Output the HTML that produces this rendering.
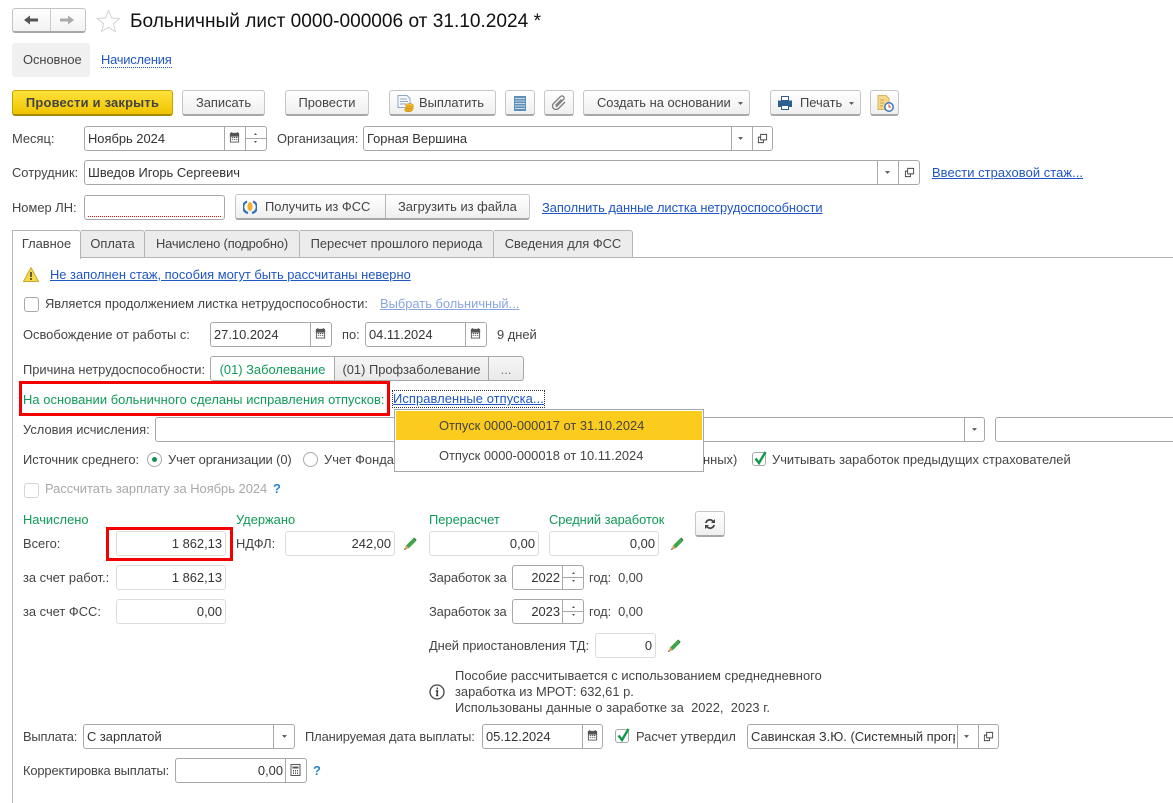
<!DOCTYPE html>
<html lang="ru"><head><meta charset="utf-8"><title>Больничный лист</title>
<style>
html,body{margin:0;padding:0;background:#fff}
body{position:relative;width:1173px;height:803px;overflow:hidden;font:12.9px/14px "Liberation Sans",Arial,sans-serif;color:#444}
div,a,svg{position:absolute}
.t{white-space:nowrap;height:14px;margin-top:1px}
.g{color:#0f9a57}
.a{color:#1f56c4;text-decoration:underline}
.f{box-sizing:border-box;background:#fff;border:1px solid #a8a8a8;border-radius:3px;height:25px}
.l{border-color:#dcdcdc}
.v{width:1px;background:#a8a8a8;top:0;bottom:0}
.h{height:1px;background:#a8a8a8;left:0;right:0;top:11px}
.b{box-sizing:border-box;height:26px;top:90px;border:1px solid #c6c6c6;border-bottom:2px solid #a8a8a8;border-radius:3px;background:linear-gradient(#fff,#efefef);text-align:center;line-height:24px;color:#444;white-space:nowrap}
.r{text-align:right}
.in{left:3px;top:5px;white-space:nowrap;color:#333}
.nr{right:3px;top:5px;white-space:nowrap;color:#333}
.tab{box-sizing:border-box;top:230px;height:28px;border:1px solid #b5b5b5;border-left:0;background:#ececec;border-radius:0 3px 0 0;text-align:center;line-height:25px;white-space:nowrap}
</style></head><body>
<svg width="0" height="0" style="left:0;top:0"><defs>
<symbol id="cal" viewBox="0 0 12 12"><path d="M1.5 2.500h9v8.500h-9z" fill="none" stroke="#555"/><path d="M1.500 1.500h9v3h-9zM3 0v2M9 0v2" stroke="#555" fill="#555"/><path d="M3 6h1.500M5.300 6h1.500M7.600 6h1.500M3 8h1.500M5.300 8h1.500M7.600 8h1.500" stroke="#555"/></symbol>
<symbol id="dd" viewBox="0 0 7 4"><path d="M0 0h7L3.500 4z" fill="#555"/></symbol>
<symbol id="op" viewBox="0 0 12 12"><path d="M4 1.500h6.500v6H4z" fill="none" stroke="#444"/><path d="M4 4.500H1.500v6H7V7.500" fill="none" stroke="#444"/></symbol>
<symbol id="pen" viewBox="0 0 14 14"><path d="M3 8.500 10 1.500 12.800 4.200 5.800 11.200z" fill="#3fa648"/><path d="M10 1.500 11.200.5 13.600 2.800 12.800 4.200z" fill="#3f7d45"/><path d="M3 8.500 1 13 5.800 11.200z" fill="#e0a060"/><path d="M1 13l.7-1.800 1.200 1z" fill="#444"/></symbol>
<symbol id="chk" viewBox="0 0 14 14"><path d="M2.500 7.500 6 12 12.500 1" fill="none" stroke="#0d9a4b" stroke-width="2.400"/></symbol>
<symbol id="spin" viewBox="0 0 5 14"><path d="M2.500 2 4 4H1zM1 10h3L2.500 12z" fill="#555"/></symbol>
</defs></svg>

<!-- header -->
<div class="f" style="left:12px;top:8px;width:74px;height:25px;border-color:#c4c4c4;border-bottom:2px solid #a8a8a8;background:linear-gradient(#fff,#f2f2f2)"><div class="v" style="left:37px;background:#ccc"></div></div>
<svg style="left:24px;top:15px" width="14" height="10" viewBox="0 0 14 10"><path d="M0 5 6 .5V3.500h8v3H6v3z" fill="#555"/></svg>
<svg style="left:60px;top:15px" width="14" height="10" viewBox="0 0 14 10"><path d="M14 5 8 .5V3.500H0v3h8v3z" fill="#aaa"/></svg>
<svg style="left:96px;top:9px" width="25" height="24" viewBox="0 0 25 24"><path d="M12.500 1.500l3.100 7.400 8 .6-6.100 5.200 1.900 7.800-6.900-4.200-6.900 4.200 1.900-7.800L1.400 9.500l8-.6z" fill="#fff" stroke="#d2d2d2"/></svg>
<div class="t" style="left:130px;top:11px;height:20px;font-size:19.100px;line-height:20px;color:#111">Больничный лист 0000-000006 от 31.10.2024 *</div>
<div style="left:12px;top:43px;width:78px;height:34px;background:#f0f0f0;border-radius:3px;line-height:34px;text-indent:11px;white-space:nowrap;letter-spacing:-.05px">Основное</div>
<div class="t" style="left:101px;top:52px;color:#1f56c4;border-bottom:1px dotted #1f56c4;height:14px;letter-spacing:-.2px">Начисления</div>

<!-- toolbar -->
<div class="b" style="left:12px;width:161px;background:linear-gradient(#fde23a,#f0c400);border-color:#c9a400;border-bottom-color:#a88a00;font-weight:bold;color:#444;letter-spacing:.22px">Провести и закрыть</div>
<div class="b" style="left:182px;width:83px">Записать</div>
<div class="b" style="left:285px;width:84px">Провести</div>
<div class="b" style="left:389px;width:107px;text-align:left;padding-left:29px">Выплатить</div>
<svg style="left:397px;top:95px" width="18" height="17" viewBox="0 0 18 17"><path d="M1 .5h9l3 3v9H1z" fill="#f5f8fc" stroke="#8fa7c2"/><path d="M3 4h7M3 6.500h8M3 9h6" stroke="#8fa7c2"/><ellipse cx="12.500" cy="10.500" rx="4" ry="2" fill="#f2b92c" stroke="#b98a10" stroke-width=".5"/><ellipse cx="12.500" cy="13" rx="4" ry="2" fill="#eeb020" stroke="#b98a10" stroke-width=".5"/><ellipse cx="11.500" cy="15" rx="4" ry="1.800" fill="#e8a818" stroke="#b98a10" stroke-width=".5"/></svg>
<div class="b" style="left:505px;width:30px"></div>
<svg style="left:514px;top:96px" width="12" height="15" viewBox="0 0 12 15"><rect width="12" height="15" fill="#5f8fb5"/><path d="M1 2.500h10M1 5h10M1 7.500h10M1 10h10M1 12.500h10" stroke="#c5d9e8"/></svg>
<div class="b" style="left:544px;width:30px"></div>
<svg style="left:551px;top:95px" width="16" height="16" viewBox="0 0 16 16"><path d="M5 12 12.500 4.500a2 2 0 0 0-3-3L2.500 8.500a3.500 3.500 0 0 0 5 5L14 7M4.500 10.500 10.500 4.500" fill="none" stroke="#7c7c7c" stroke-width="1.300"/></svg>
<div class="b" style="left:583px;width:167px;text-align:left;padding-left:13px">Создать на основании</div>
<svg style="left:738px;top:102px" width="5" height="3"><use href="#dd"/></svg>
<div class="b" style="left:770px;width:91px;text-align:left;padding-left:29px">Печать</div>
<svg style="left:778px;top:96px" width="14" height="14" viewBox="0 0 14 14"><path d="M3.500.5h7v4h-7z" fill="#fff" stroke="#2e5f8e"/><path d="M0 4.500h14v6.500h-3v-2H3v2H0z" fill="#2e5f8e"/><path d="M3.500 9.500h7v4h-7z" fill="#fff" stroke="#2e5f8e"/></svg>
<svg style="left:849px;top:102px" width="5" height="3"><use href="#dd"/></svg>
<div class="b" style="left:870px;width:29px"></div>
<svg style="left:877px;top:95px" width="17" height="17" viewBox="0 0 17 17"><path d="M1 .5h8l3 3v11H1z" fill="#f4d78a" stroke="#d8b45a"/><path d="M3 5h4M3 8h4M3 11h3" stroke="#c9a650"/><circle cx="12" cy="12" r="4.200" fill="#fff" stroke="#3f78b5" stroke-width="1.500"/><path d="M12 9.500V12h2" stroke="#c44" fill="none"/></svg>

<!-- row: month/org -->
<div class="t" style="left:12px;top:131px">Месяц:</div>
<div class="f" style="left:84px;top:126px;width:183px"><div class="in">Ноябрь 2024</div><div class="v" style="left:139px"></div><div class="v" style="left:160px"></div><div class="h" style="left:161px"></div></div>
<svg style="left:229px;top:132px" width="11" height="11"><use href="#cal"/></svg>
<svg style="left:253px;top:131px" width="5" height="14"><use href="#spin"/></svg>
<div class="t" style="left:277px;top:131px">Организация:</div>
<div class="f" style="left:363px;top:126px;width:410px"><div class="in">Горная Вершина</div><div class="v" style="left:367px"></div><div class="v" style="left:388px"></div></div>
<svg style="left:738px;top:137px" width="5" height="3"><use href="#dd"/></svg>
<svg style="left:757px;top:133px" width="11" height="11"><use href="#op"/></svg>

<!-- row: employee -->
<div class="t" style="left:12px;top:165px">Сотрудник:</div>
<div class="f" style="left:84px;top:160px;width:836px"><div class="in">Шведов Игорь Сергеевич</div><div class="v" style="left:792px"></div><div class="v" style="left:813px"></div></div>
<svg style="left:885px;top:171px" width="5" height="3"><use href="#dd"/></svg>
<svg style="left:904px;top:167px" width="11" height="11"><use href="#op"/></svg>
<div class="t a" style="left:932px;top:165px;letter-spacing:.08px">Ввести страховой стаж...</div>

<!-- row: LN -->
<div class="t" style="left:12px;top:200px">Номер ЛН:</div>
<div class="f" style="left:84px;top:195px;width:141px"><div style="left:3px;right:3px;top:20px;border-top:1px dotted #e01010"></div></div>
<div class="b" style="left:235px;top:194px;width:295px;height:26px"><div class="v" style="left:149px;background:#b5b5b5"></div><div style="left:29px;top:0">Получить из ФСС</div><div style="left:162px;top:0">Загрузить из файла</div></div>
<svg style="left:243px;top:200px" width="14" height="14" viewBox="0 0 14 14"><path d="M4 1.500A6 6 0 0 0 5 13M10 1.500A6 6 0 0 1 9 13" fill="none" stroke="#2f6fb5" stroke-width="2.200"/><ellipse cx="7" cy="6.500" rx="2.500" ry="4.500" fill="#f0b030"/></svg>
<div class="t a" style="left:542px;top:200px;letter-spacing:-.05px">Заполнить данные листка нетрудоспособности</div>

<!-- tabs -->
<div style="left:12px;top:257px;right:0;height:1px;background:#b5b5b5"></div>
<div style="left:12px;top:230px;width:1px;height:573px;background:#b5b5b5"></div>
<div class="tab" style="left:13px;width:68px;background:#fff;border-bottom:0;height:29px">Главное</div>
<div class="tab" style="left:81px;width:64px">Оплата</div>
<div class="tab" style="left:145px;width:155px;letter-spacing:-.15px">Начислено (подробно)</div>
<div class="tab" style="left:300px;width:194px">Пересчет прошлого периода</div>
<div class="tab" style="left:494px;width:139px">Сведения для ФСС</div>

<!-- warning -->
<svg style="left:23px;top:267px" width="16" height="15" viewBox="0 0 16 15"><path d="M8 .5 15.500 14.500H.5z" fill="#f6d94a" stroke="#c9a930"/><path d="M8 5v5M8 11v2" stroke="#333" stroke-width="1.500"/></svg>
<div class="t a" style="left:50px;top:267px">Не заполнен стаж, пособия могут быть рассчитаны неверно</div>

<div class="f" style="left:24px;top:297px;width:15px;height:15px"></div>
<div class="t" style="left:45px;top:296px">Является продолжением листка нетрудоспособности:</div>
<div class="t a" style="left:380px;top:296px;color:#8aa6de">Выбрать больничный...</div>

<div class="t" style="left:23px;top:327px">Освобождение от работы с:</div>
<div class="f" style="left:210px;top:322px;width:122px"><div class="in">27.10.2024</div><div class="v" style="left:99px"></div></div>
<svg style="left:315px;top:328px" width="11" height="11"><use href="#cal"/></svg>
<div class="t" style="left:342px;top:327px">по:</div>
<div class="f" style="left:365px;top:322px;width:122px"><div class="in">04.11.2024</div><div class="v" style="left:99px"></div></div>
<svg style="left:470px;top:328px" width="11" height="11"><use href="#cal"/></svg>
<div class="t" style="left:497px;top:327px">9 дней</div>

<div class="t" style="left:23px;top:362px">Причина нетрудоспособности:</div>
<div class="f" style="left:210px;top:356px;width:314px;background:linear-gradient(#f6f6f6,#e9e9e9);overflow:hidden">
<div style="left:0;top:0;bottom:0;width:123px;background:#fff;text-align:center;line-height:25px;color:#0f9a57;white-space:nowrap">(01) Заболевание</div>
<div class="v" style="left:123px"></div>
<div style="left:124px;top:0;width:153px;text-align:center;line-height:25px;white-space:nowrap">(01) Профзаболевание</div>
<div class="v" style="left:277px"></div>
<div style="left:278px;top:0;width:34px;text-align:center;line-height:25px;color:#777">...</div>
</div>

<div class="t g" style="left:23px;top:392px;letter-spacing:.06px">На основании больничного сделаны исправления отпусков:</div>
<div style="left:19px;top:381px;box-sizing:border-box;width:371px;height:35px;border:3px solid #f40000"></div>
<div class="t a" style="left:393px;top:390px;height:16px;line-height:15px;outline:1px dotted #333;letter-spacing:.09px">Исправленные отпуска...</div>

<div class="t" style="left:23px;top:422px">Условия исчисления:</div>
<div class="f" style="left:155px;top:417px;width:830px"><div class="v" style="left:808px"></div></div>
<svg style="left:972px;top:428px" width="5" height="3"><use href="#dd"/></svg>
<div class="f" style="left:995px;top:417px;width:190px"></div>

<div class="t" style="left:23px;top:452px">Источник среднего:</div>
<div style="left:147px;top:452px;box-sizing:border-box;width:15px;height:15px;border:1px solid #a8a8a8;border-radius:50%"><div style="left:4px;top:4px;width:5px;height:5px;border-radius:50%;background:#0d8f50"></div></div>
<div class="t" style="left:168px;top:452px;letter-spacing:-.1px">Учет организации (0)</div>
<div style="left:303px;top:452px;box-sizing:border-box;width:15px;height:15px;border:1px solid #a8a8a8;border-radius:50%"></div>
<div class="t" style="left:324px;top:452px">Учет Фонда</div>
<div class="t" style="left:703px;top:452px">нных)</div>
<div class="f" style="left:752px;top:452px;width:14px;height:14px"></div>
<svg style="left:753px;top:451px" width="14" height="14"><use href="#chk"/></svg>
<div class="t" style="left:772px;top:452px">Учитывать заработок предыдущих страхователей</div>

<div class="f" style="left:24px;top:483px;width:15px;height:15px;border-color:#d5d5d5"></div>
<div class="t" style="left:45px;top:481px;color:#a8a8a8">Рассчитать зарплату за Ноябрь 2024</div>
<div class="t" style="left:273px;top:481px;color:#2a86c8;font-weight:bold">?</div>

<!-- popup -->
<div style="left:394px;top:409px;box-sizing:border-box;width:310px;height:63px;background:#fff;border:1px solid #a8a8a8">
<div style="left:1px;top:1px;width:306px;height:29px;background:#fbcb1e;line-height:29px;white-space:nowrap"><span style="margin-left:43px">Отпуск 0000-000017 от 31.10.2024</span></div>
<div class="t" style="left:44px;top:38px">Отпуск 0000-000018 от 10.11.2024</div>
</div>

<!-- totals -->
<div class="t g" style="left:23px;top:512px">Начислено</div>
<div class="t" style="left:23px;top:536px">Всего:</div>
<div class="f l" style="left:116px;top:531px;width:110px"><div class="nr">1 862,13</div></div>
<div style="left:106px;top:527px;box-sizing:border-box;width:127px;height:34px;border:3px solid #f40000"></div>
<div class="t" style="left:23px;top:570px">за счет работ.:</div>
<div class="f l" style="left:116px;top:565px;width:110px"><div class="nr">1 862,13</div></div>
<div class="t" style="left:23px;top:604px">за счет ФСС:</div>
<div class="f l" style="left:116px;top:599px;width:110px"><div class="nr">0,00</div></div>

<div class="t g" style="left:236px;top:512px">Удержано</div>
<div class="t" style="left:236px;top:536px">НДФЛ:</div>
<div class="f l" style="left:285px;top:531px;width:110px"><div class="nr">242,00</div></div>
<svg style="left:403px;top:537px" width="14" height="14"><use href="#pen"/></svg>

<div class="t g" style="left:429px;top:512px">Перерасчет</div>
<div class="f l" style="left:429px;top:531px;width:110px"><div class="nr">0,00</div></div>
<div class="t g" style="left:549px;top:512px;letter-spacing:-.05px">Средний заработок</div>
<div class="f l" style="left:549px;top:531px;width:110px"><div class="nr">0,00</div></div>
<svg style="left:670px;top:537px" width="14" height="14"><use href="#pen"/></svg>
<div class="b" style="left:695px;top:511px;width:30px"></div>
<svg style="left:704px;top:518px" width="12" height="12" viewBox="0 0 12 12"><path d="M1 5a5 5 0 0 1 8.500-2.500L11 1v4H7l1.300-1.300A3.300 3.300 0 0 0 2.800 5zM11 7a5 5 0 0 1-8.500 2.500L1 11V7h4L3.700 8.300A3.300 3.300 0 0 0 9.200 7z" fill="#444"/></svg>

<div class="t" style="left:429px;top:570px;letter-spacing:-.1px">Заработок за</div>
<div class="f" style="left:512px;top:565px;width:72px"><div class="nr" style="right:23px">2022</div><div class="v" style="left:49px"></div><div class="h" style="left:50px"></div></div>
<svg style="left:571px;top:570px" width="5" height="14"><use href="#spin"/></svg>
<div class="t" style="left:589px;top:570px;letter-spacing:-.08px">год:&nbsp; 0,00</div>
<div class="t" style="left:429px;top:604px;letter-spacing:-.1px">Заработок за</div>
<div class="f" style="left:512px;top:599px;width:72px"><div class="nr" style="right:23px">2023</div><div class="v" style="left:49px"></div><div class="h" style="left:50px"></div></div>
<svg style="left:571px;top:604px" width="5" height="14"><use href="#spin"/></svg>
<div class="t" style="left:589px;top:604px;letter-spacing:-.08px">год:&nbsp; 0,00</div>
<div class="t" style="left:429px;top:638px;letter-spacing:-.08px">Дней приостановления ТД:</div>
<div class="f l" style="left:595px;top:633px;width:61px"><div class="nr">0</div></div>
<svg style="left:667px;top:639px" width="14" height="14"><use href="#pen"/></svg>

<svg style="left:429px;top:684px" width="16" height="16" viewBox="0 0 16 16"><circle cx="8" cy="8" r="7" fill="#fff" stroke="#444" stroke-width="1.300"/><path d="M8.300 3.500v1.800M6.800 7h1.700L7.800 11.500h1.500" fill="none" stroke="#333" stroke-width="1.400"/></svg>
<div class="t" style="left:455px;top:668px;letter-spacing:.05px">Пособие рассчитывается с использованием среднедневного</div>
<div class="t" style="left:455px;top:684px">заработка из МРОТ: 632,61 р.</div>
<div class="t" style="left:455px;top:700px;white-space:pre;letter-spacing:.04px">Использованы данные о заработке за  2022,  2023 г.</div>

<!-- bottom -->
<div class="t" style="left:23px;top:729px;letter-spacing:-.2px">Выплата:</div>
<div class="f" style="left:83px;top:724px;width:212px"><div class="in">С зарплатой</div><div class="v" style="left:189px"></div></div>
<svg style="left:282px;top:735px" width="5" height="3"><use href="#dd"/></svg>
<div class="t" style="left:305px;top:729px;letter-spacing:-.11px">Планируемая дата выплаты:</div>
<div class="f" style="left:482px;top:724px;width:121px"><div class="in">05.12.2024</div><div class="v" style="left:99px"></div></div>
<svg style="left:587px;top:730px" width="11" height="11"><use href="#cal"/></svg>
<div class="f" style="left:615px;top:729px;width:14px;height:14px"></div>
<svg style="left:616px;top:728px" width="14" height="14"><use href="#chk"/></svg>
<div class="t" style="left:636px;top:729px">Расчет утвердил</div>
<div class="f" style="left:747px;top:724px;width:252px;overflow:hidden"><div class="in" style="width:204px;overflow:hidden">Савинская З.Ю. (Системный программист)</div><div class="v" style="left:209px"></div><div class="v" style="left:230px"></div></div>
<svg style="left:964px;top:735px" width="5" height="3"><use href="#dd"/></svg>
<svg style="left:983px;top:731px" width="11" height="11"><use href="#op"/></svg>
<div class="t" style="left:23px;top:763px;letter-spacing:-.14px">Корректировка выплаты:</div>
<div class="f" style="left:175px;top:758px;width:132px"><div class="nr" style="right:23px">0,00</div><div class="v" style="left:109px"></div></div>
<svg style="left:290px;top:764px" width="11" height="12" viewBox="0 0 11 12"><path d="M1 .5h9v11H1z" fill="none" stroke="#555"/><path d="M2.500 2.500h6v2h-6z" fill="#555"/><path d="M3 6.500h1M5 6.500h1M7 6.500h1M3 8h1M5 8h1M7 8h1M3 9.500h1M5 9.500h1M7 9.500h1" stroke="#555"/></svg>
<div class="t" style="left:313px;top:763px;color:#2a86c8;font-weight:bold">?</div>
</body></html>
